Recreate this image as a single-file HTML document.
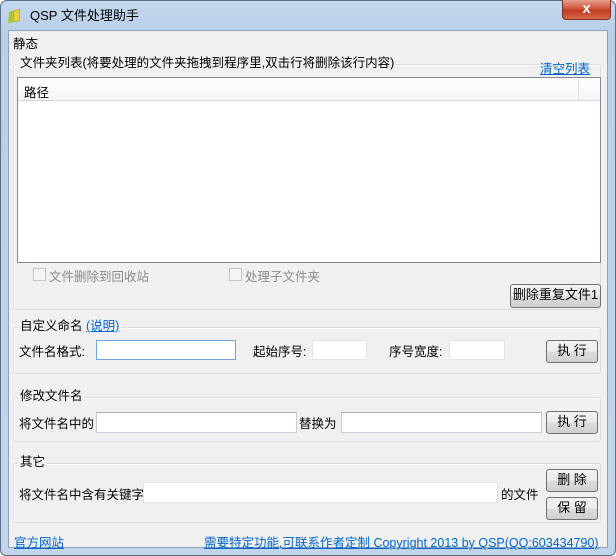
<!DOCTYPE html>
<html><head><meta charset="utf-8"><style>
*{box-sizing:border-box;margin:0;padding:0}
body{width:616px;height:556px;overflow:hidden;background:#fff;font-family:"Liberation Sans","Noto Sans CJK SC",sans-serif;font-size:12px;color:#000;position:relative}
.frame{position:absolute;left:0;top:0;width:616px;height:556px;border-radius:7px 7px 6px 6px;background:linear-gradient(180deg,#c4d8ee 0,#b9cfe8 30px,#c2d5eb 100%);border:1px solid #5a6e88}
.client{position:absolute;left:8px;top:30px;width:600px;height:518px;background:#f0f0f0;border:1px solid #8da1bb}
.a{position:absolute;white-space:nowrap}
.grp{position:absolute;border:1px solid #dcdcdc;border-radius:3px;box-shadow:inset 1px 1px 0 #fff}
.lbl{position:absolute;background:#f0f0f0;padding:0 2px;line-height:14px;font-size:12.5px}
.inp{position:absolute;background:#fff;border:1px solid #c9ced6;border-top-color:#abadb3}
.btn{position:absolute;border:1px solid #707070;border-radius:3px;background:linear-gradient(#f2f2f2 0,#ebebeb 50%,#dddddd 51%,#cfcfcf 100%);text-align:center;line-height:20px;font-size:13px}
a{color:#0066cc;text-decoration:underline}
.cb{position:absolute;width:13px;height:13px;border:1px solid #c4c4c4;background:#f4f4f4}
.gray{color:#8a8a8a}
</style></head><body>
<div class="frame"></div>
<svg class="a" style="left:7px;top:8px" width="16" height="16" viewBox="0 0 16 16"><path d="M2 4 L8 2 L7 14 L1 15Z" fill="#a8c43a"/><path d="M7 3 L13 1 L12 13 L6 14Z" fill="#e8d23a" stroke="#a09020" stroke-width=".5"/></svg>
<div class="a" style="left:30px;top:5px;font-size:13px">QSP 文件处理助手</div>
<div class="a" style="left:562px;top:0;width:49px;height:20px;border:1px solid #7a3028;border-top:none;border-radius:0 0 4px 4px;background:linear-gradient(#e8a090,#d0553c 45%,#c03a22 55%,#d86a48);color:#fff;font-weight:bold;text-align:center;line-height:18px;font-size:15px">x</div>
<div class="client"></div>
<div class="a" style="left:13px;top:33px;font-size:12.5px">静态</div>
<div class="grp" style="left:13px;top:64px;width:588px;height:246px"></div>
<div class="lbl" style="left:18px;top:56px">文件夹列表(将要处理的文件夹拖拽到程序里,双击行将删除该行内容)</div>
<a class="a" style="left:540px;top:58px;font-size:12.5px">清空列表</a>
<div class="a" style="left:17px;top:77px;width:584px;height:186px;background:#fff;border:1px solid #828790"></div>
<div class="a" style="left:18px;top:78px;width:582px;height:23px;background:linear-gradient(#fff,#f5f5f5);border-bottom:1px solid #d5d5d5"></div>
<div class="a" style="left:578px;top:78px;width:1px;height:22px;background:#e0e0e0"></div>
<div class="a" style="left:24px;top:82px;font-size:12.5px">路径</div>
<div class="cb" style="left:33px;top:268px"></div>
<div class="a gray" style="left:49px;top:266px;font-size:12.5px">文件删除到回收站</div>
<div class="cb" style="left:229px;top:268px"></div>
<div class="a gray" style="left:245px;top:266px;font-size:12.5px">处理子文件夹</div>
<div class="btn" style="left:510px;top:284px;width:91px;height:24px">删除重复文件1</div>
<div class="grp" style="left:13px;top:327px;width:588px;height:47px"></div>
<div class="lbl" style="left:18px;top:319px">自定义命名 <a>(说明)</a></div>
<div class="a" style="left:19px;top:341px;font-size:12.5px">文件名格式:</div>
<div class="inp" style="left:96px;top:340px;width:140px;height:20px;border-color:#6fa5d8"></div>
<div class="a" style="left:253px;top:341px;font-size:12.5px">起始序号:</div>
<div class="inp" style="left:312px;top:340px;width:55px;height:20px;border-color:#e3e3e3"></div>
<div class="a" style="left:389px;top:341px;font-size:12.5px">序号宽度:</div>
<div class="inp" style="left:449px;top:340px;width:56px;height:20px;border-color:#e3e3e3"></div>
<div class="btn" style="left:546px;top:340px;width:52px;height:23px">执 行</div>
<div class="grp" style="left:13px;top:397px;width:588px;height:45px"></div>
<div class="lbl" style="left:18px;top:389px">修改文件名</div>
<div class="a" style="left:19px;top:413px;font-size:12.5px">将文件名中的</div>
<div class="inp" style="left:96px;top:412px;width:201px;height:21px"></div>
<div class="a" style="left:299px;top:413px;font-size:12.5px">替换为</div>
<div class="inp" style="left:341px;top:412px;width:201px;height:21px"></div>
<div class="btn" style="left:546px;top:411px;width:52px;height:23px">执 行</div>
<div class="grp" style="left:13px;top:463px;width:588px;height:60px"></div>
<div class="lbl" style="left:18px;top:455px">其它</div>
<div class="a" style="left:19px;top:484px;font-size:12.5px">将文件名中含有关键字</div>
<div class="inp" style="left:143px;top:482px;width:355px;height:21px;border-color:#e3e3e3"></div>
<div class="a" style="left:501px;top:484px;font-size:12.5px">的文件</div>
<div class="btn" style="left:546px;top:469px;width:52px;height:23px">删 除</div>
<div class="btn" style="left:546px;top:497px;width:52px;height:23px">保 留</div>
<a class="a" style="left:14px;top:532px;font-size:12.5px">官方网站</a>
<a class="a" style="left:204px;top:532px;font-size:12.5px">需要特定功能,可联系作者定制 Copyright 2013 by QSP(QQ:603434790)</a>
</body></html>
